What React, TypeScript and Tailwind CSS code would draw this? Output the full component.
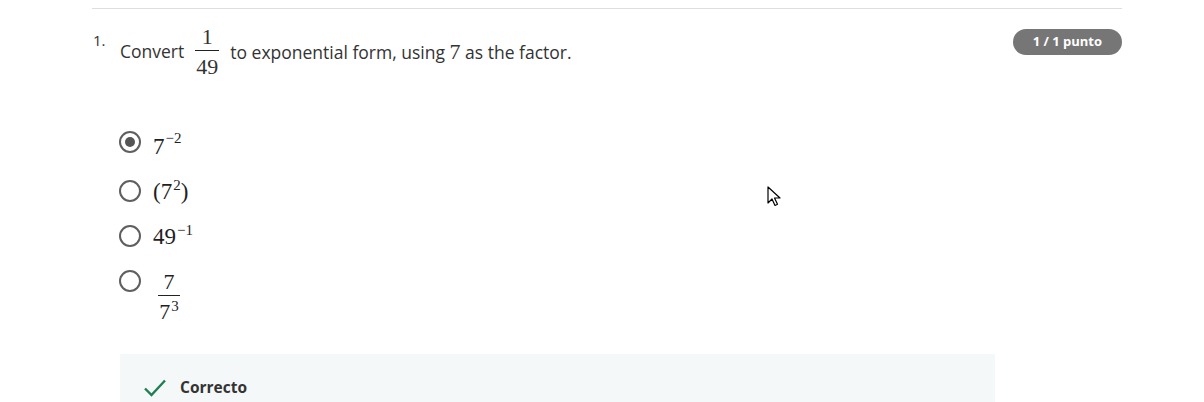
import type { ReactNode } from "react";

const sans = { fontFamily: '"Open Sans", Arial, sans-serif' };
const serif = { fontFamily: '"Liberation Serif", "Times New Roman", serif' };

function Frac({ top, bottom, width }: { top: ReactNode; bottom: ReactNode; width: string }) {
  return (
    <span className={`flex flex-col items-center ${width}`} style={serif}>
      <span className="text-[22px] leading-[21px]">{top}</span>
      <span className="w-full border-t border-[#222] mt-[3px] mb-[5px]" />
      <span className="text-[22px] leading-[21px]">{bottom}</span>
    </span>
  );
}

function Sup({ children, raise = "-top-[10px]" }: { children: ReactNode; raise?: string }) {
  return <span className={`relative ${raise} text-[15px] ml-[1px]`}>{children}</span>;
}

function Radio({ checked }: { checked?: boolean }) {
  return (
    <span className="w-[22px] h-[22px] rounded-full border-2 border-[#5f5f5f] flex items-center justify-center shrink-0">
      {checked && <span className="w-[10px] h-[10px] rounded-full bg-[#555]" />}
    </span>
  );
}

export default function App() {
  return (
    <div className="relative bg-white w-[1204px] h-[402px] overflow-hidden text-[#1f1f1f]" style={sans}>
      <div className="ml-[92px] w-[1030px] mt-2 border-t border-[#dedede]">
        {/* Question header */}
        <div className="flex items-start pt-[17px]">
          <div className="w-[28px] pl-[1px] pt-[5px] text-[15px] leading-[18px] text-[#333]">1.</div>
          <div className="flex-1 flex items-center text-[17.5px] text-[#333]">
            <span>Convert</span>
            <span className="flex mx-[11px]">
              <Frac width="w-[24px]" top="1" bottom="49" />
            </span>
            <span>
              to exponential form, using{" "}
              <span className="text-[22px]" style={serif}>7</span> as the factor.
            </span>
          </div>
          <div className="mt-[3px] h-[26px] px-[20px] rounded-full bg-[#767676] text-white text-[13px] font-bold flex items-center">
            1 / 1 punto
          </div>
        </div>

        {/* Options */}
        <div className="ml-[27px] mt-[54px] flex flex-col text-[#1f1f1f]">
          <div className="flex items-start gap-3 h-[49px]">
            <Radio checked />
            <span className="text-[23px] leading-[22px] mt-[5px]" style={serif}>
              7<Sup raise="-top-[11px]">−2</Sup>
            </span>
          </div>
          <div className="flex items-start gap-3 h-[45px]">
            <Radio />
            <span className="text-[23px] leading-[22px] mt-[1px]" style={serif}>
              (7<Sup raise="-top-[9px]">2</Sup>)
            </span>
          </div>
          <div className="flex items-start gap-3 h-[45px]">
            <Radio />
            <span className="text-[23px] leading-[22px] mt-[1px]" style={serif}>
              49<Sup raise="-top-[9px]">−1</Sup>
            </span>
          </div>
          <div className="flex items-start gap-3">
            <Radio />
            <span className="flex ml-[5px] mt-[1px]">
              <Frac
                width="w-[22px]"
                top="7"
                bottom={
                  <>
                    7<Sup raise="-top-[8px]">3</Sup>
                  </>
                }
              />
            </span>
          </div>
        </div>

        {/* Feedback */}
        <div className="ml-[28px] mt-[29px] w-[875px] h-[60px] bg-[#f5f8f8] pl-[23px] pt-[20px] flex items-start gap-[13px]">
          <svg width="24" height="24" viewBox="0 0 24 24" className="mt-[1px]">
            <path d="M2 13.5l6.5 6.5L22 5.5" fill="none" stroke="#1e7f55" strokeWidth="2.4" />
          </svg>
          <span className="text-[15.5px] font-bold text-[#333] leading-[26px]">Correcto</span>
        </div>
      </div>

      {/* Mouse cursor */}
      <svg className="absolute left-[767px] top-[186px]" width="14" height="21" viewBox="0 0 14 21">
        <path d="M1 1v16l4-4 3 6.5 2.5-1.2-3-6.3h5.5z" fill="#fff" stroke="#000" strokeWidth="1.2" strokeLinejoin="round" />
      </svg>
    </div>
  );
}
